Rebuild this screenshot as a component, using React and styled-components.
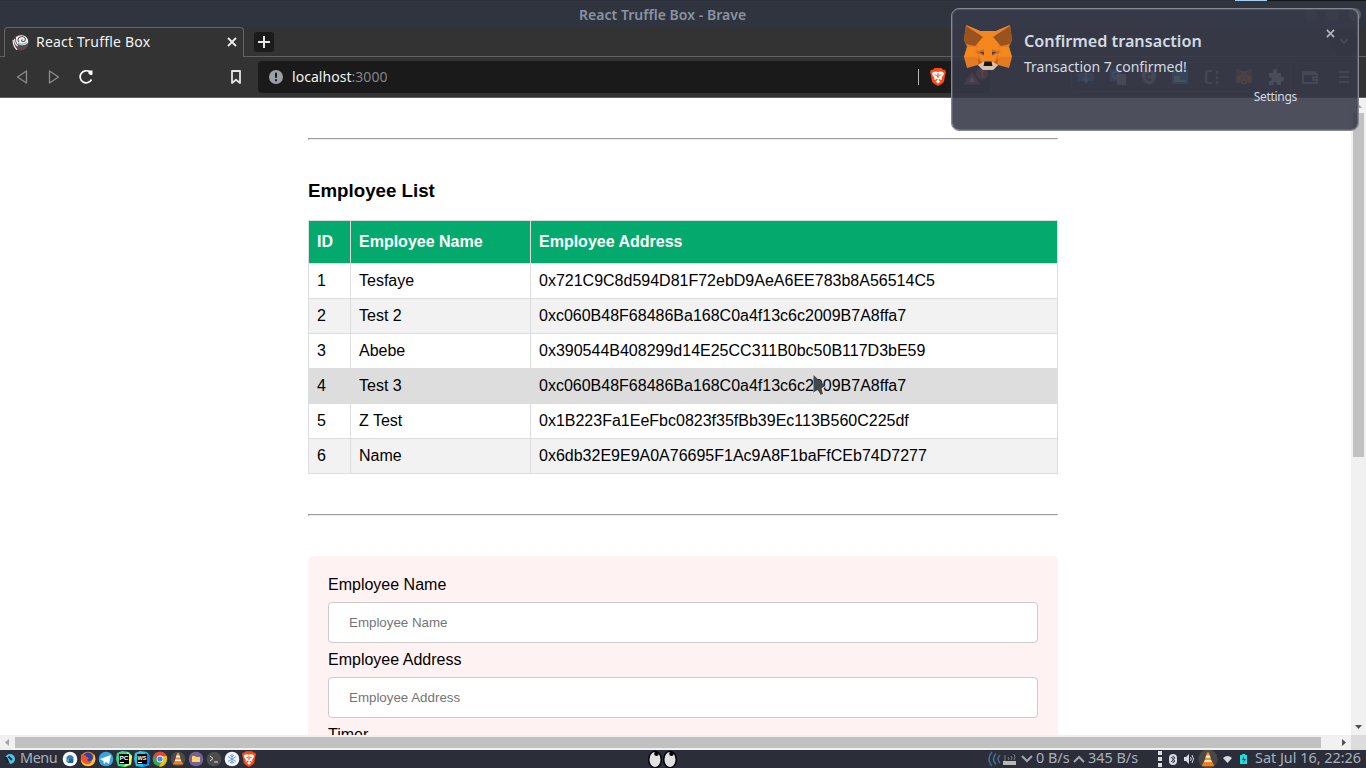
import React from 'react';
import styled, { createGlobalStyle, css } from 'styled-components';

const Global = createGlobalStyle`
  * { box-sizing: border-box; }
  html, body { margin: 0; padding: 0; overflow: hidden; background: #2b2e39; }
  svg { display: block; flex: none; }
`;

const uiFont = css`font-family: "Noto Sans", "Open Sans", sans-serif;`;

const Desktop = styled.div`
  position: relative;
  width: 1366px;
  height: 768px;
  overflow: hidden;
  display: flex;
  flex-direction: column;
  ${uiFont}
`;

/* ---------- window frame ---------- */
const PanelEdge = styled.div`
  height: 1px;
  background: linear-gradient(90deg, #2a2e3a 0 1235px, #a5cdf5 1235px 1267px, #14161c 1267px 100%);
`;
const TitleBar = styled.header`
  height: 26px;
  background: #2f343f;
  display: grid;
  grid-template-columns: 579px auto 1fr;
  align-items: center;
  padding: 1px 5px 0 0;
`;
const WindowTitle = styled.div`
  grid-column: 2;
  color: #8a93a3;
  font-size: 14px;
  font-weight: 600;
  line-height: 20px;
  letter-spacing: 0.03px;
`;
const WindowButtons = styled.div`
  justify-self: end;
  display: flex;
  gap: 9px;
`;
const WindowButton = styled.span`
  width: 13px;
  height: 13px;
  border-radius: 50%;
  background: ${p => p.$color};
`;

const TabStrip = styled.div`
  height: 30px;
  background: #333;
  display: flex;
  align-items: flex-end;
  &::before { content: ''; width: 4px; height: 1px; background: #606060; }
`;
const Tab = styled.div`
  width: 240px;
  height: 30px;
  border: 1px solid #666;
  border-bottom: 0;
  border-radius: 4px 4px 0 0;
  display: flex;
  align-items: center;
  padding: 0 6px 1px 7px;
  color: #f2f2f2;
  font-size: 14px;
  gap: 7px;
`;
const TabTitle = styled.span`
  flex: 1;
  line-height: 20px;
  white-space: nowrap;
  letter-spacing: 0.2px;
`;
const StripRest = styled.div`
  flex: 1;
  height: 30px;
  border-bottom: 1px solid #606060;
  display: flex;
  justify-content: space-between;
  align-items: center;
  padding: 0 8px 0 10px;
`;
const NewTab = styled.div`
  width: 20px;
  height: 20px;
  border-radius: 3px;
  background: #1b1b1b;
  display: grid;
  place-items: center;
`;
const TabSearch = styled.div`
  width: 28px;
  height: 28px;
  border-radius: 50%;
  background: #1b1b1b;
  display: grid;
  place-items: center;
`;

const Toolbar = styled.nav`
  height: 41px;
  background: #333;
  border-bottom: 1px solid #606060;
  display: flex;
  align-items: center;
  padding: 0 16px 0 15px;
`;
const NavGroup = styled.div`
  display: flex;
  gap: 16px;
  width: 213px;
`;
const BookmarkSlot = styled.div`width: 30px;`;
const AddressBar = styled.div`
  height: 32px;
  width: 732px;
  background: #1a1a1a;
  border-radius: 4px;
  display: flex;
  align-items: center;
  padding: 0 1px 0 10px;
  color: #80868b;
  font-size: 14px;
  b { font-weight: 400; color: #f3f3f3; }
`;
const Url = styled.span`
  flex: 1;
  margin-left: 8px;
  line-height: 20px;
  letter-spacing: 0.04px;
`;
const Divider = styled.i`
  width: 1px;
  height: 16px;
  background: #b8b8b8;
  margin-right: 11px;
`;
const ShieldGap = styled.div`margin-right: 17px;`;
const Extensions = styled.div`
  display: flex;
  align-items: center;
  justify-content: space-between;
  width: 220px;
  height: 30px;
  margin-left: 81px;
  padding: 0 6px;
  border: 1px solid #4a4a4a;
  border-radius: 4px;
`;
const ToolEnd = styled.div`
  display: flex;
  flex: 1;
  justify-content: flex-end;
  gap: 20px;
`;

/* ---------- page ---------- */
const Viewport = styled.div`
  height: 637px;
  display: flex;
`;
const Page = styled.main`
  width: 1351px;
  overflow: hidden;
  background: #fff;
  color: #000;
  font: 16px/18px "Liberation Sans", Arial, sans-serif;
  padding: 40px 293px 0 308px;
`;
const Rule = styled.hr`
  margin: 0 0 40px;
  border: 1px solid;
  border-color: #9a9a9a #eee #eee #9a9a9a;
`;
const Heading = styled.h3`
  margin: 0 0 19px;
  font-size: 18.72px;
  line-height: 21px;
`;
const Table = styled.table`
  width: 750px;
  table-layout: fixed;
  border-collapse: collapse;
  margin-bottom: 40px;
`;
const Col = styled.col`width: ${p => p.$w}px;`;
const HeadCell = styled.th`
  border: 1px solid #ddd;
  background: #04aa6d;
  color: #fff;
  padding: 12px 8px;
  text-align: left;
`;
const Cell = styled.td`
  border: 1px solid #ddd;
  padding: 8px;
`;
const Row = styled.tr`
  background: ${p => (p.$active ? '#ddd' : p.$even ? '#f2f2f2' : '#fff')};
`;
const Form = styled.form`
  background: #fff2f2;
  border-radius: 5px;
  padding: 20px;
`;
const Label = styled.label`display: block;`;
const Field = styled.input`
  display: block;
  width: 100%;
  height: 41px;
  margin: 8px 0;
  padding: 12px 20px;
  border: 1px solid #ccc;
  border-radius: 4px;
  background: #fff;
  font: 13.333px "Liberation Sans", Arial, sans-serif;
  &::placeholder { color: #757575; opacity: 1; }
`;

/* ---------- scrollbars ---------- */
const VScroll = styled.div`
  width: 15px;
  background: #f1f1f1;
  display: flex;
  flex-direction: column;
  align-items: center;
  padding: 6px 0;
`;
const VThumb = styled.div`
  width: 11px;
  height: 344px;
  margin: 5px 0 auto;
  background: #c1c1c1;
`;
const HScroll = styled.div`
  height: 15px;
  display: flex;
  align-items: center;
  background: #f1f1f1;
  padding-left: 5px;
`;
const HThumb = styled.div`
  width: 1306px;
  height: 11px;
  margin: 0 auto 0 6px;
  background: #c1c1c1;
`;
const Corner = styled.div`
  width: 15px;
  height: 15px;
  margin-left: 5px;
  background: #dcdcdc;
`;

/* ---------- taskbar ---------- */
const Taskbar = styled.footer`
  height: 18px;
  background: #2b2e39;
  color: #a9b0bd;
  font-size: 14.4px;
  line-height: 16px;
  display: grid;
  grid-template-columns: 648px 1fr auto;
  align-items: center;
`;
const Launchers = styled.div`
  display: flex;
  align-items: center;
  padding-left: 4px;
  gap: 2px;
`;
const MenuLabel = styled.span`
  width: 40px;
  margin-left: 2px;
  padding-bottom: 2px;
  letter-spacing: -0.4px;
`;
const Tray = styled.div`
  display: flex;
  align-items: center;
  padding-right: 4px;
`;
const TrayText = styled.span`
  width: ${p => p.$w}px;
  padding-bottom: 2px;
  white-space: nowrap;
`;
const TrayIcon = styled.span`
  width: ${p => p.$w}px;
  display: flex;
  justify-content: center;
`;

/* ---------- overlays ---------- */
const Toast = styled.aside`
  position: absolute;
  left: 951px;
  top: 8px;
  width: 408px;
  height: 123px;
  border: 1px solid #858994;
  border-radius: 8px;
  background: rgba(55, 58, 72, 0.89);
  background-clip: padding-box;
  box-shadow: inset 0 0 0 1px rgba(133, 137, 148, 0.35);
  display: flex;
  padding: 16px 12px 0;
`;
const ToastBody = styled.div`
  flex: 1;
  margin-left: 12px;
  color: #d3dae3;
`;
const ToastTitle = styled.div`
  font-size: 16.2px;
  font-weight: 600;
  line-height: 24px;
  margin-top: 4px;
`;
const ToastText = styled.div`
  font-size: 14px;
  line-height: 20px;
  margin-top: 4px;
`;
const ToastAction = styled.div`
  font-size: 12px;
  line-height: 16px;
  margin: 12px 29px 0 0;
  text-align: right;
  letter-spacing: -0.3px;
`;
const ToastClose = styled.div`
  width: 10px;
  padding-top: 4px;
  margin-right: 10px;
`;
const Pointer = styled.svg`
  position: absolute;
  left: 812px;
  top: 374px;
`;

const Cross = ({ size, color, width = 2 }) => (
  <svg width={size} height={size} viewBox="0 0 10 10"><path d="M1 1l8 8M9 1L1 9" stroke={color} strokeWidth={width} /></svg>
);

const Fox = ({ size }) => (
  <svg width={size} height={size * 0.96} viewBox="0 0 48 46">
    <path d="M2 0L16 6H32L46 0L48 15L45 22L48 32L45 43L34 40L29 45H19L14 40L3 43L0 32L3 22L0 15Z" fill="#e57a25" />
    <path d="M16 6H32L35 24L30 38H18L13 24Z" fill="#f5871f" />
    <path d="M2 1L19 12L11 21L2 19L0 14ZM46 1L29 12L37 21L46 19L48 14Z" fill="#99531f" />
    <path d="M2 0L16 6L20 12ZM46 0L32 6L28 12Z" fill="#e8892f" />
    <path d="M3 22L12 22L14 32L0 32ZM45 22L36 22L34 32L48 32Z" fill="#f5871f" />
    <path d="M11 27L20 24L20 31ZM37 27L28 24L28 31Z" fill="#d56a1c" />
    <path d="M14 33L19 38L14 40ZM34 33L29 38L34 40Z" fill="#cd6116" />
    <path d="M15.500 27l4.500 0 0 2.700zM32.500 27l-4.500 0 0 2.700z" fill="#3a4350" />
    <path d="M14 40L19 37H29L34 40L29 45H19Z" fill="#d7c1b3" />
    <path d="M20.500 36.500H27.500L28.500 41H19.500Z" fill="#161616" />
  </svg>
);

const Lion = ({ w, h }) => (
  <svg width={w} height={h} viewBox="0 0 16 18">
    <path d="M4.500 0H11.500L13 1.700L15 1.700L16 4.500L15.300 6L14 13.500Q13 15.500 8 18Q3 15.500 2 13.500L.7 6L0 4.500L1 1.700L3 1.700Z" fill="#fb4a14" />
    <path d="M3 4L6 3.500L8 4L10 3.500L13 4L14 6L11.500 10L12 12L8.800 11L8.600 12L10.500 13.500L8 15.500L5.500 13.500L7.400 12L7.200 11L4 12L4.500 10L2 6Z" fill="#fff" />
    <path d="M4 6.300L7 7L6.400 8.300ZM12 6.300L9 7L9.600 8.300ZM7.500 5h1l.3 4.500L8 10l-.8-.5ZM6 10.500l1.500.5-.5 1z" fill="#fb4a14" />
  </svg>
);

const Truffle = () => (
  <svg width="17" height="17" viewBox="0 0 17 17">
    <circle cx="8.500" cy="8.500" r="8" fill="#5e464d" />
    <path d="M4 3Q8 0 13 2Q17 5 16 9Q13 12 8 11Q4 10 4 6Z" fill="#e9f1f0" />
    <path d="M7 8Q4.500 5 8 3Q12 1.500 13.500 5Q13 8 10.500 7.500Q8.500 6.500 10.500 5.500" fill="none" stroke="#6d555b" strokeWidth="1.100" />
    <path d="M6 9Q10 11.500 15 8.500" fill="none" stroke="#69c8bd" strokeWidth="1.200" />
    <path d="M1.200 6Q1 12 5 15.800M2.500 5Q2.500 10 6 12" fill="none" stroke="#e3e3e3" strokeWidth="1.300" />
  </svg>
);

const Disc = ({ bg, children }) => (
  <svg width="16" height="16" viewBox="0 0 16 16"><circle cx="8" cy="8" r="7.300" fill={bg} />{children}</svg>
);

const Cone = () => (
  <>
    <path d="M7.200 2h1.600l2.700 9h-7z" fill="#f68b1f" />
    <path d="M6.500 4.500h3l.6 2H5.900zM5.300 8.500h5.400l.5 1.500H4.800z" fill="#f4f4f4" />
    <path d="M4 10.500h8l1.200 3H2.800z" fill="#f0801a" />
  </>
);

const Jet = ({ a, b, label }) => (
  <svg width="16" height="16" viewBox="0 0 16 16">
    <path d="M1 2L6 0L13 1L16 5L15 14L9 16L2 15L0 8Z" fill={a} />
    <path d="M11 1L16 5L15 13L8 16L12 8Z" fill={b} />
    <rect x="3" y="3" width="10" height="10" fill="#000" />
    <text x="3.500" y="8.500" fontSize="6" fontWeight="700" fontFamily="Liberation Sans" fill="#fff" textLength="9" lengthAdjust="spacingAndGlyphs">{label}</text>
    <path d="M4 11.500h4" stroke="#fff" />
  </svg>
);

const rows = [
  [1, 'Tesfaye', '0x721C9C8d594D81F72ebD9AeA6EE783b8A56514C5'],
  [2, 'Test 2', '0xc060B48F68486Ba168C0a4f13c6c2009B7A8ffa7'],
  [3, 'Abebe', '0x390544B408299d14E25CC311B0bc50B117D3bE59'],
  [4, 'Test 3', '0xc060B48F68486Ba168C0a4f13c6c2009B7A8ffa7'],
  [5, 'Z Test', '0x1B223Fa1EeFbc0823f35fBb39Ec113B560C225df'],
  [6, 'Name', '0x6db32E9E9A0A76695F1Ac9A8F1baFfCEb74D7277'],
];

function BrowserChrome() {
  return (
    <>
      <PanelEdge />
      <TitleBar>
        <WindowTitle>React Truffle Box - Brave</WindowTitle>
        <WindowButtons>
          <WindowButton $color="#4b505d" />
          <WindowButton $color="#4b505d" />
          <WindowButton $color="#5a5e66" />
        </WindowButtons>
      </TitleBar>
      <TabStrip>
        <Tab>
          <Truffle />
          <TabTitle>React Truffle Box</TabTitle>
          <Cross size={10} color="#eee" width={1.8} />
        </Tab>
        <StripRest>
          <NewTab>
            <svg width="12" height="12" viewBox="0 0 12 12"><path d="M6 0v12M0 6h12" stroke="#e8e8e8" strokeWidth="2" /></svg>
          </NewTab>
          <TabSearch>
            <svg width="10" height="7" viewBox="0 0 10 7"><path d="M1 1l4 4 4-4" fill="none" stroke="#ccc" strokeWidth="1.800" /></svg>
          </TabSearch>
        </StripRest>
      </TabStrip>
      <Toolbar>
        <NavGroup>
          <svg width="16" height="16" viewBox="0 0 16 16"><path d="M11.500 2v12L2.500 8z" fill="none" stroke="#8b8b8b" strokeWidth="1.300" strokeLinejoin="round" /></svg>
          <svg width="16" height="16" viewBox="0 0 16 16"><path d="M2.500 2v12l9-6z" fill="none" stroke="#8b8b8b" strokeWidth="1.300" strokeLinejoin="round" /></svg>
          <svg width="16" height="16" viewBox="0 0 16 16"><path d="M10.800 3A6 6 0 1 0 12.500 10.500" fill="none" stroke="#fff" strokeWidth="1.700" /><path d="M9.500 1.500h4v4l-1.500.8-2.500-1.500z" fill="#fff" /></svg>
        </NavGroup>
        <BookmarkSlot>
          <svg width="16" height="16" viewBox="0 0 16 16"><path d="M4 2h8v12l-4-3.200L4 14z" fill="none" stroke="#e4e4e4" strokeWidth="1.800" strokeLinejoin="round" /></svg>
        </BookmarkSlot>
        <AddressBar>
          <svg width="16" height="16" viewBox="0 0 16 16"><circle cx="8" cy="8" r="7" fill="#9aa0a6" /><path d="M8 3.800v5M8 10.300v2" stroke="#1a1a1a" strokeWidth="2" /></svg>
          <Url><b>localhost</b>:3000</Url>
          <Divider />
          <ShieldGap><Lion w={16} h={18} /></ShieldGap>
          <svg width="26" height="20" viewBox="0 0 26 20"><path d="M9 5L17.500 17.500H.5z" fill="#c2477e" /><path d="M9 10l3 5H6z" fill="#fff" /><circle cx="19" cy="6.500" r="6" fill="#d94a3c" /><text x="17" y="9.500" fontSize="8" fill="#fff">1</text></svg>
        </AddressBar>
        <Extensions>
          <svg width="16" height="16" viewBox="0 0 16 16"><path d="M0 4h16v8H0z" fill="#2d7fd8" /><path d="M8 1v12M5 9l3 4 3-4" stroke="#a5c5e8" strokeWidth="2" fill="none" /></svg>
          <svg width="16" height="16" viewBox="0 0 16 16"><rect width="11" height="12" fill="#4285f4" /><rect x="7" y="5" width="9" height="11" fill="#bbb" /><path d="M8 4.200A3 3 0 1 0 8.500 6.500H6" fill="none" stroke="#fff" strokeWidth="1.200" /></svg>
          <svg width="14" height="16" viewBox="0 0 14 16"><path d="M7 0l7 2v6q-1 6-7 8Q1 14 0 8V2z" fill="#aaadb2" /><path d="M9.500 6a3 3 0 1 0 0 4" fill="none" stroke="#333" strokeWidth="1.500" /></svg>
          <svg width="16" height="16" viewBox="0 0 16 16"><rect y="1" width="16" height="14" fill="#2ba7ee" /><path d="M2 7h6v4h6v2H2z" fill="#dff2fd" /></svg>
          <svg width="16" height="16" viewBox="0 0 16 16"><path d="M8 2H5Q2 2 2 5v6q0 3 3 3h3M13 2v3M13 7v3M13 12v3" fill="none" stroke="#aaa" strokeWidth="2.200" /></svg>
          <Fox size={16} />
          <svg width="16" height="16" viewBox="0 0 16 16"><path d="M1 4h4q-1-4 2-4t2 4h4v4q3-1 3 2t-3 2v4H9q0-3-2-3t-2 3H1v-4q3 0 3-2T1 8z" fill="#ddd" /></svg>
        </Extensions>
        <ToolEnd>
          <svg width="16" height="16" viewBox="0 0 16 16"><path d="M1 3h12v2h2v9H1zM1 5h12M15 8h-4v3h4" fill="none" stroke="#ddd" strokeWidth="1.500" /></svg>
          <svg width="12" height="16" viewBox="0 0 12 16"><path d="M1 3h10M1 8h10M1 13h10" stroke="#ddd" strokeWidth="1.500" /></svg>
        </ToolEnd>
      </Toolbar>
    </>
  );
}

function EmployeePage() {
  return (
    <Page>
      <Rule />
      <Heading>Employee List</Heading>
      <Table>
        <colgroup><Col $w={42} /><Col $w={180} /><Col $w={527} /></colgroup>
        <thead>
          <tr><HeadCell>ID</HeadCell><HeadCell>Employee Name</HeadCell><HeadCell>Employee Address</HeadCell></tr>
        </thead>
        <tbody>
          {rows.map(([id, name, address]) => (
            <Row key={id} $even={id % 2 === 0} $active={id === 4}>
              <Cell>{id}</Cell><Cell>{name}</Cell><Cell>{address}</Cell>
            </Row>
          ))}
        </tbody>
      </Table>
      <Rule />
      <Form>
        <Label>Employee Name</Label>
        <Field placeholder="Employee Name" />
        <Label>Employee Address</Label>
        <Field placeholder="Employee Address" />
        <Label>Timer</Label>
      </Form>
    </Page>
  );
}

function SystemBar() {
  return (
    <Taskbar>
      <Launchers>
        <svg width="12" height="12" viewBox="0 0 12 12"><circle cx="6" cy="6" r="5" fill="#4fc3e8" /><path d="M0 4l3 0 3 7-4-1z" fill="#20232c" /><path d="M4.500 3.500l3.500 3.500" stroke="#20232c" strokeWidth="1.800" /></svg>
        <MenuLabel>Menu</MenuLabel>
        <Disc bg="#f5f7f8"><path d="M4.500 6q3.500-4 7 0v5q-3.500 2-7 0z" fill="#3b78c4" /><path d="M6 8h5v4H6z" fill="#2c5d94" /><path d="M4 10l3-3v4z" fill="#59b881" /></Disc>
        <Disc bg="#ff8a1c"><circle cx="8" cy="6.500" r="5" fill="#2a3fb0" /><path d="M14 3q2 3 1 7-2 5-7 5-6 0-7-6 2 3 6 3 7-1 7-9z" fill="#ffc52b" /><path d="M1 3q-1 8 5 10 4 1 6-3-4 1-5-1l2-2q-3-1-4-3-2 1-4-1z" fill="#f0502b" /></Disc>
        <Disc bg="#37a5dd"><path d="M2 8l11-4-2 9-3-2-2 2-.5-3z" fill="#fff" /></Disc>
        <Jet a="#35d888" b="#f1f560" label="PC" />
        <Jet a="#20c9ee" b="#087cfa" label="WS" />
        <Disc bg="#34a853"><path d="M1.700 4.400a7.300 7.300 0 0 1 13 .6H8L5 9z" fill="#ea4335" /><path d="M8 5h6.700Q16 9 13 13t-6 2.200l4-6z" fill="#fbbc05" /><circle cx="8" cy="8" r="3.400" fill="#fff" /><circle cx="8" cy="8" r="2.600" fill="#4285f4" /></Disc>
        <Disc bg="#4b4b4b"><Cone /></Disc>
        <Disc bg="#756297"><path d="M4 5h3l1 1h4v5H4z" fill="#ffd25d" /></Disc>
        <Disc bg="#4d4d4d"><path d="M4 5l3 2.500L4 10M8 11h4" fill="none" stroke="#ddd" /></Disc>
        <Disc bg="#f2f5fa"><path d="M8 3v10M4 5.500l8 5M12 5.500l-8 5M6 4l2 2 2-2M6 12l2-2 2 2" fill="none" stroke="#6a9bdc" /></Disc>
        <Lion w={14} h={16} />
      </Launchers>
      <svg width="29" height="18" viewBox="0 0 29 18">
        {[7, 22].map(x => (
          <g key={x}><ellipse cx={x} cy="9.500" rx="6.300" ry="8.300" fill="#e1e1e1" stroke="#050505" strokeWidth="1.600" /><circle cx={x + 1.500} cy="3.700" r="2.300" fill="#050505" /></g>
        ))}
      </svg>
      <Tray>
        <svg width="30" height="16" viewBox="0 0 30 16"><path d="M4 1q-6 7 0 14M8 2.500q-5 5.500 0 11M12 4q-4 4 0 8" fill="none" stroke="#426a94" strokeWidth="1.600" /><path d="M15 10h13v4H15z" fill="#b8b9b4" /><path d="M17 10V4M23 5q2 2 0 4M20 6q2 2 0 3M26 3q2 4 0 6" stroke="#777e87" fill="none" /></svg>
        <TrayIcon $w={18}><svg width="12" height="8" viewBox="0 0 12 8"><path d="M1 1l5 5 5-5" fill="none" stroke="#a0a5ae" strokeWidth="2" /></svg></TrayIcon>
        <TrayText $w={34}>0 B/s</TrayText>
        <TrayIcon $w={18}><svg width="12" height="8" viewBox="0 0 12 8"><path d="M1 7l5-5 5 5" fill="none" stroke="#a0a5ae" strokeWidth="2" /></svg></TrayIcon>
        <TrayText $w={68}>345 B/s</TrayText>
        <TrayIcon $w={8}><svg width="4" height="16" viewBox="0 0 4 16"><path d="M0 0h4v4H0zM0 6h4v4H0zM0 12h4v4H0z" fill="#d8dce3" /></svg></TrayIcon>
        <TrayIcon $w={17}><svg width="8" height="11" viewBox="0 0 8 11"><rect width="8" height="11" rx="4" fill="#d5dae2" /><path d="M2 3l4 4-2 2V2l2 2-4 4" stroke="#2b2e39" fill="none" strokeWidth=".8" /></svg></TrayIcon>
        <TrayIcon $w={15}><svg width="10" height="10" viewBox="0 0 10 10"><path d="M0 3h2l3-3v10L2 7H0z" fill="#d5dae2" /><path d="M6.500 3q1.500 2 0 4M8 1q3 4 0 8" stroke="#d5dae2" fill="none" /></svg></TrayIcon>
        <TrayIcon $w={23}><svg width="20" height="18" viewBox="0 0 16 15"><circle cx="8" cy="7.500" r="8" fill="#4b4745" /><Cone /></svg></TrayIcon>
        <TrayIcon $w={16}><svg width="9" height="7" viewBox="0 0 9 7"><path d="M0 2q4.500-4 9 0L4.500 7z" fill="#d5dae2" /></svg></TrayIcon>
        <TrayIcon $w={17}><svg width="7" height="10" viewBox="0 0 7 10"><path d="M2 0h3v1h2v9H0V1h2z" fill="#18e1e6" /><path d="M4 2L2 6h2L3 9l3-4H4z" fill="#17303b" /></svg></TrayIcon>
        <TrayIcon $w={3} />
        <TrayText $w={107}>Sat Jul 16, 22:26</TrayText>
      </Tray>
    </Taskbar>
  );
}

export default function App() {
  return (
    <Desktop>
      <Global />
      <BrowserChrome />
      <Viewport>
        <EmployeePage />
        <VScroll>
          <svg width="7" height="4" viewBox="0 0 7 4"><path d="M0 4l3.500-4L7 4z" fill="#a3a3a3" /></svg>
          <VThumb />
          <svg width="7" height="4" viewBox="0 0 7 4"><path d="M0 0l3.500 4L7 0z" fill="#505050" /></svg>
        </VScroll>
      </Viewport>
      <HScroll>
        <svg width="4" height="7" viewBox="0 0 4 7"><path d="M4 0L0 3.500 4 7z" fill="#a3a3a3" /></svg>
        <HThumb />
        <svg width="4" height="7" viewBox="0 0 4 7"><path d="M0 0l4 3.500L0 7z" fill="#505050" /></svg>
        <Corner />
      </HScroll>
      <SystemBar />
      <Toast>
        <Fox size={48} />
        <ToastBody>
          <ToastTitle>Confirmed transaction</ToastTitle>
          <ToastText>Transaction 7 confirmed!</ToastText>
          <ToastAction>Settings</ToastAction>
        </ToastBody>
        <ToastClose><Cross size={9} color="#b1b6c0" width={1.8} /></ToastClose>
      </Toast>
      <Pointer width="14" height="23" viewBox="0 0 14 23">
        <path d="M1.500 1v18l4-2.500 3 5 3-1.500-1.500-5.500 3.500-2z" fill="#45484b" />
        <path d="M1.500 19l4-2.500 3 5 3-1.500-1.500-5.500 3.500-2" fill="none" stroke="#f3f3f3" strokeWidth="1" />
      </Pointer>
    </Desktop>
  );
}
